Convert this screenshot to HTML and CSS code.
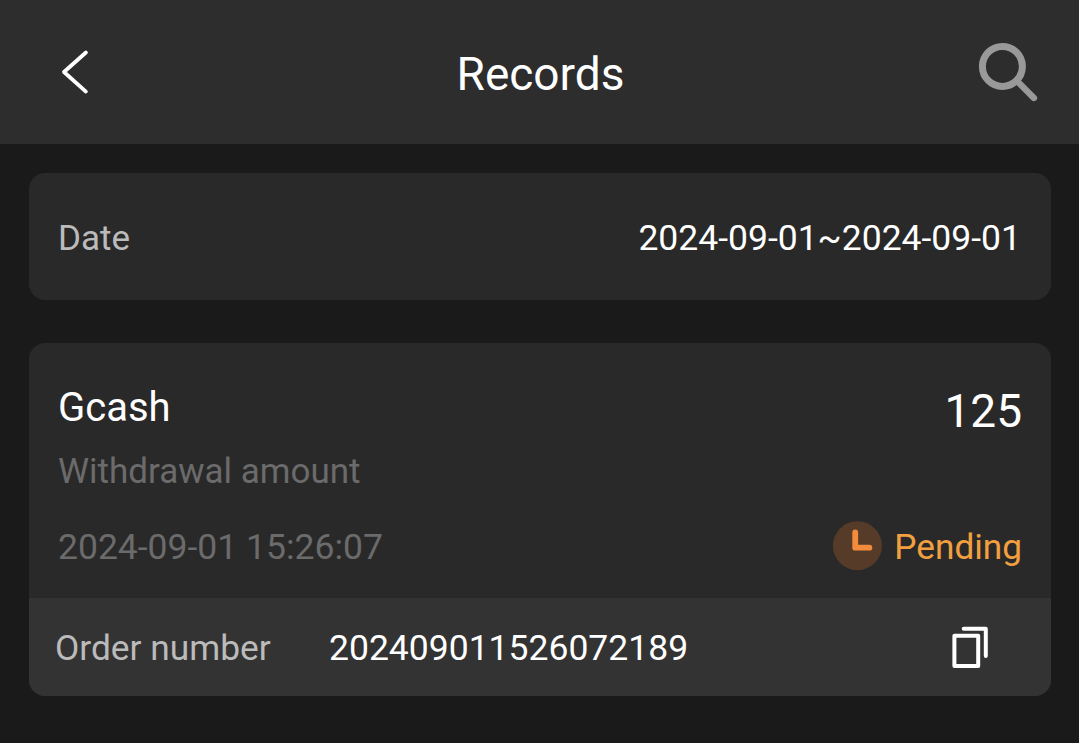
FILE: index.html
```html
<!DOCTYPE html>
<html lang="en">
<head>
<meta charset="utf-8">
<title>Records</title>
<link rel="stylesheet" href="styles.css">
</head>
<body>
<header class="topbar">
  <svg class="back" viewBox="0 0 40 56" aria-label="Back"><path d="M29.9 8.5 8 28 29.9 47.6"/></svg>
  <h1 class="title">Records</h1>
  <svg class="search" viewBox="0 0 64 64" aria-label="Search"><circle cx="27.4" cy="26.4" r="20"/><path d="M43 42 58.9 57.9"/></svg>
</header>
<main class="content">
  <section class="card date-card">
    <span class="label">Date</span>
    <span class="range">2024-09-01~2024-09-01</span>
  </section>
  <section class="card record">
    <div class="record-body">
      <div class="row row-main"><span class="method">Gcash</span><span class="amount">125</span></div>
      <div class="row row-kind"><span class="kind">Withdrawal amount</span></div>
      <div class="row row-status">
        <time class="time">2024-09-01 15:26:07</time>
        <span class="status">
          <svg class="clock" viewBox="0 0 50 50"><circle cx="25.4" cy="24.7" r="24.5"/><path d="M23.2 11.3V26.7H37.4"/></svg>
          <span class="pending">Pending</span>
        </span>
      </div>
    </div>
    <footer class="order">
      <span class="order-label">Order number</span>
      <span class="order-number">202409011526072189</span>
      <svg class="copy" viewBox="0 0 40 44"><path d="M4.4 9.8H28.2V40H4.4Z"/><path d="M13.7 2.8H35.8V30"/></svg>
    </footer>
  </section>
</main>
</body>
</html>
```
FILE: styles.css
```css
* { box-sizing: border-box; }
body { margin: 0; height: 743px; background: #1a1a1a; color: #fff; font-family: Roboto, sans-serif; overflow: hidden; }
svg { display: block; fill: none; flex: none; overflow: visible; stroke-linecap: round; stroke-linejoin: round; }
.topbar { height: 144px; padding: 0 40px 0 56px; display: grid; grid-template-columns: 64px 1fr 80px; align-items: center; background: #2d2d2d; }
.back { width: 40px; height: 56px; stroke: #fff; stroke-width: 3.8; }
.title { margin: 4px 0 0 2px; text-align: center; font-size: 46px; line-height: 56px; font-weight: 400; }
.search { width: 64px; height: 64px; justify-self: end; stroke: #999; stroke-width: 6.4; }
.search circle { stroke-width: 7; }
.content { padding: 29px 28px 0 29px; }
.card { border-radius: 16px; background: #292929; overflow: hidden; }
.date-card { height: 127px; padding: 4px 30px 0 29px; display: flex; align-items: center; justify-content: space-between; font-size: 35.5px; }
.label { color: #bbb; font-size: 35px; }
.range { padding-bottom: 2px; }
.record { margin-top: 43px; height: 353px; }
.record-body { height: 255px; padding: 36px 29px 0; }
.row { display: flex; justify-content: space-between; align-items: center; }
.row-main { height: 60px; }
.method { font-size: 40px; padding-bottom: 4px; }
.amount { font-size: 46px; padding-top: 3px; }
.row-kind { height: 64px; }
.row-status { height: 88px; }
.kind { color: #6b6b6b; font-size: 35px; padding-top: 1px; }
.time { color: #6b6b6b; font-size: 35.5px; padding-bottom: 1px; }
.status { display: flex; align-items: center; gap: 12px; }
.clock { width: 50px; height: 50px; margin-bottom: 3px; }
.clock circle { fill: #563c28; }
.clock path { stroke: #f28c3c; stroke-width: 5.8; }
.pending { color: #f2a03f; font-size: 35.2px; padding-bottom: 1px; }
.order { height: 98px; padding: 2px 61px 0 26px; display: flex; align-items: center; background: #333; font-size: 35.5px; }
.order-label { width: 274px; color: #bbb; font-size: 35.3px; }
.copy { width: 40px; height: 44px; margin-left: auto; stroke: #fff; stroke-width: 4; }
```
